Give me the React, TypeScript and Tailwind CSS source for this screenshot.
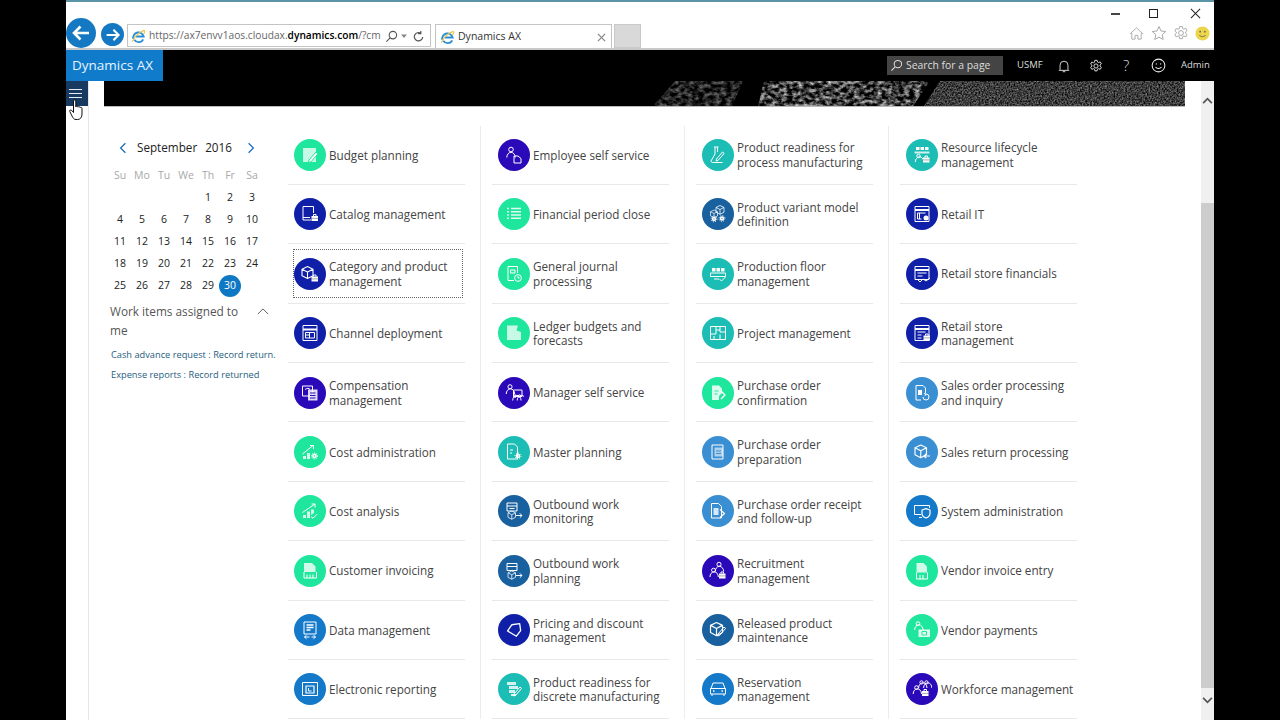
import React from "react";

const S = ({ children }: { children: React.ReactNode }) => (
  <svg viewBox="0 0 20 20" className="w-5 h-5" fill="none" stroke="currentColor" strokeWidth="1" strokeLinejoin="round">
    {children}
  </svg>
);

const Bag = ({ x = 12, y = 12 }: { x?: number; y?: number }) => (
  <g>
    <path d={`M${x + 2} ${y}v-1.5h2.5V${y}`} />
    <rect x={x} y={y} width={6.5} height={5} fill="currentColor" stroke="none" />
    <path d={`M${x} ${y + 2.4}h6.5`} stroke="#555" strokeWidth="0.5" />
  </g>
);
const Gear = ({ x = 14, y = 14, r = 2 }: { x?: number; y?: number; r?: number }) => (
  <g>
    <circle cx={x} cy={y} r={r} strokeWidth="1.6" />
    <circle cx={x} cy={y} r={r + 1.5} strokeDasharray="1 1.3" strokeWidth="1" />
  </g>
);
const Person = ({ x = 7, y = 3, s = 1 }: { x?: number; y?: number; s?: number }) => (
  <g>
    <circle cx={x} cy={y + 2 * s} r={2.3 * s} />
    <path d={`M${x - 4.2 * s} ${y + 10 * s}c0-3 2-5.2 4.2-5.2s4.2 2.2 4.2 5.2`} />
  </g>
);
const Doc = ({ x = 4, y = 2, w = 10, h = 15 }: { x?: number; y?: number; w?: number; h?: number }) => (
  <path d={`M${x} ${y}h${w - 3}l3 3v${h - 3}h-${w}z`} />
);
const Store = () => (
  <g>
    <rect x="3" y="2.5" width="14" height="15" />
    <path d="M3 6.5h14" strokeWidth="2" />
    <path d="M5.5 9.5h9v5.5h-9zM5.5 12h4M9.5 9.5V15" />
  </g>
);
const Cube = ({ x = 3, y = 3, s = 1 }: { x?: number; y?: number; s?: number }) => (
  <g transform={`translate(${x} ${y}) scale(${s})`}>
    <path d="M5 0l5 2.4v6L5 11 0 8.4v-6zM0 2.4 5 5l5-2.6M5 5v6" />
  </g>
);
const Arrow = ({ x = 11, y = 15 }: { x?: number; y?: number }) => (
  <path d={`M${x} ${y}h6m-2.2-2.2 2.2 2.2-2.2 2.2`} />
);
const Clock = ({ x = 14, y = 14 }: { x?: number; y?: number }) => (
  <g>
    <circle cx={x} cy={y} r="3.4" />
    <path d={`M${x} ${y - 1.8}v1.8h1.6`} />
  </g>
);
const Pencil = ({ x = 11, y = 16 }: { x?: number; y?: number }) => (
  <path d={`M${x} ${y}l6-7 1.6 1.4-6 7-2 .6z`} />
);

const icons: Record<string, React.ReactNode> = {
  budget: <S><rect x="3" y="3" width="13" height="14" fill="currentColor" stroke="none" opacity=".75" /><path d="M9 15l7-8 2 1.8-7 8-2.6.6z" fill="currentColor" stroke="#1ee79d" /></S>,
  catalog: <S><path d="M11 16H3V2.5h10.5V9" /><path d="M3 13.5h7" /><Bag x={11.5} y={12} /></S>,
  category: <S><Cube x={2} y={2.5} s={1.1} /><Bag x={11.5} y={12.5} /></S>,
  channel: <S><Store /></S>,
  comp: <S><rect x="2.5" y="3" width="10" height="10" /><path d="M5 6.5c2-1.5 4-1.5 5 0" /><rect x="8" y="6.5" width="9.5" height="11" fill="currentColor" stroke="none" opacity=".85" /><path d="M10 10h5.5M10 12.5h5.5M10 15h5.5" stroke="#2a0ab8" /></S>,
  costadmin: <S><path d="M2.5 12 13 3.5M10 3.5h3.5V7" /><path d="M3 17v-3h3v3zM7 17v-6h3v6z" fill="currentColor" stroke="none" opacity=".8" /><Gear x={14.5} y={14} r={1.6} /></S>,
  costanalysis: <S><path d="M2.5 11.5 15 3M11.5 3H15v3.5" /><path d="M3 17v-3h3v3zM7 17V10.5h3V17zM11 14V8.5h3V12z" fill="currentColor" stroke="none" opacity=".8" /><path d="M11 15.5l2 1.8 4-4" /></S>,
  custinv: <S><path d="M4 2h8l3.5 3.5V11H4z" fill="currentColor" stroke="none" opacity=".8" /><path d="M4 11v6h12.5v-6M7 17v-3.5M10 17v-3.5M13 17v-3.5" /></S>,
  data: <S><rect x="4" y="2" width="12" height="12" /><path d="M6.5 5h7M6.5 7.5h7M6.5 10h4" strokeWidth="1.3" /><path d="M4.5 17h5M6.5 15.2 4.5 17l2 1.8M15.5 17h-4M13.5 15.2l2 1.8-2 1.8" /></S>,
  electronic: <S><rect x="2.5" y="3.5" width="15" height="13" /><rect x="6" y="7" width="8" height="7" strokeWidth="1.2" /><path d="M8.5 9v3h3" /></S>,
  employee: <S><Person x={7} y={2.5} /><path d="M10 11h4l3 2.5V18h-7z" /></S>,
  period: <S><path d="M3 4.5h2M7 4.5h10M3 7.8h2M7 7.8h10M3 11h2M7 11h10M3 14.3h2M7 14.3h10" strokeWidth="1.6" opacity=".85" /></S>,
  journal: <S><path d="M4 2.5h9.5V9M10 16.5H4v-14" /><path d="M6.5 6h4.5v3H6.5z" /><Clock x={14} y={14} /></S>,
  ledger: <S><path d="M3 2.5h11l-1.5 5 4.5 1.5v8H3z" fill="currentColor" stroke="none" opacity=".75" /></S>,
  manager: <S><Person x={6} y={2} s={.9} /><rect x="9.5" y="7" width="8.5" height="6.5" /><Person x={11} y={12} s={.55} /><Person x={15.5} y={12} s={.55} /></S>,
  master: <S><Doc x={3.5} y={2} w={10} h={15} /><path d="M6 8h3M6 11h2" /><Gear x={14} y={14} r={1.5} /></S>,
  outmon: <S><rect x="3" y="2" width="10" height="8" /><path d="M3 5h10M5.5 7.5h5" /><Cube x={4} y={10} s={.75} /><Arrow x={12} y={14.5} /></S>,
  outplan: <S><rect x="3" y="2.5" width="10" height="7" /><path d="M3 5.5h10" /><Cube x={4} y={10} s={.75} /><Arrow x={12} y={14.5} /></S>,
  pricing: <S><path d="M8.5 4.5h8v7l-5 5L3.5 10z" transform="rotate(-8 10 10)" strokeWidth="1.3" /></S>,
  discrete: <S><path d="M3 3h9v3H3zM5 7h9v3H5z" fill="currentColor" stroke="none" opacity=".8" /><path d="M5 11h6v3H5zM7 15h5v2H7z" fill="currentColor" stroke="none" opacity=".8" /><Pencil x={10} y={15} /></S>,
  process: <S><path d="M6 2h4.5M7 2v7l-4 7c0 1 .6 1.5 1.5 1.5h10" /><path d="M9.5 2v5" /><Pencil x={8.5} y={14} /></S>,
  variant: <S><Cube x={8} y={1.5} s={.8} /><Cube x={2.5} y={6} s={.7} /><Gear x={6} y={15} r={1.4} /><Gear x={14} y={14.5} r={1.4} /></S>,
  floor: <S><path d="M4 4h3.5v3.5H4zM8.5 4H12v3.5H8.5zM13 4h3.5v3.5H13z" fill="currentColor" stroke="none" /><path d="M2.5 9h15v3.5h-15z" /><path d="M6 15h5M11.5 15l2 2 4-4" /></S>,
  project: <S><rect x="2.5" y="3.5" width="15" height="13" /><path d="M8 3.5V11H2.5M12 3.5V9h5.5M8 7h4M12 11.5v5M6 13v3.5" /></S>,
  poconf: <S><path d="M4 2.5h7l3 3V10l-3 3v4H4z" fill="currentColor" stroke="none" opacity=".85" /><path d="M6.5 8h4M6.5 11h3" stroke="#1ee79d" /><path d="M13 8l4 4-4 4" strokeWidth="1.4" /></S>,
  poprep: <S><rect x="4" y="3" width="11" height="14" /><rect x="6.5" y="5.5" width="8.5" height="9" fill="currentColor" stroke="none" opacity=".6" /><path d="M8 9h5M8 11.5h5" stroke="#3a8fd0" /></S>,
  poreceipt: <S><path d="M3.5 2.5h7l3 3V17h-10z" /><rect x="5.5" y="7" width="5" height="7" fill="currentColor" stroke="none" opacity=".8" /><path d="M12 8.5l4.5 4-4.5 4" strokeWidth="1.2" /></S>,
  recruit: <S><Person x={5.5} y={7.5} s={.85} /><Person x={11} y={1.5} s={.9} /><Bag x={11} y={12.5} /></S>,
  released: <S><Cube x={2.5} y={2.5} s={1.2} /><Pencil x={10} y={14} /></S>,
  reservation: <S><path d="M3 9.5l2-5.500h10l2 5.500M2.5 9.500h15V15h-15zM4 15v2M16 15v2" /><path d="M5 12h1.500M13.500 12H15" strokeWidth="1.4" /></S>,
  lifecycle: <S><path d="M4 2h3.500v3H4zM8.500 2H12v3H8.500zM13 2h3.500v3H13z" fill="currentColor" stroke="none" /><path d="M2.500 6.500h15v2h-15z" fill="currentColor" stroke="none" opacity=".8" /><Person x={6.5} y={9.5} s={.75} /><Bag x={11} y={12.5} /></S>,
  retailit: <S><rect x="3" y="2.5" width="14" height="15" /><path d="M3 6h14" strokeWidth="2" /><path d="M5.500 9h8M5.500 9v6h4M7.500 9v6" /><circle cx="14" cy="14" r="2.5" fill="currentColor" stroke="none" /></S>,
  retailfin: <S><rect x="3" y="2.5" width="14" height="13" /><path d="M3 6h14" strokeWidth="2" /><path d="M5.500 9h9M5.500 12h5" /><path d="M5 15l3 3 3-3 3 2 4-3" /></S>,
  retailmgmt: <S><rect x="3" y="2.5" width="14" height="15" /><path d="M3 6h14" strokeWidth="2" /><path d="M5.500 9h8M5.500 12h4M5.500 15h4" /><Bag x={11.5} y={12.5} /></S>,
  salesorder: <S><path d="M4 2.500h7l2.500 2.500v5M9 17H4V2.500" /><rect x="6" y="7" width="4" height="5" fill="currentColor" stroke="none" /><path d="M11 14a3 3 0 1 0 3-3M12 10.500l2 .5-1 1.800" /></S>,
  salesreturn: <S><Cube x={3} y={3} s={1.15} /><path d="M18 14h-6m2.200-2.200L12 14l2.200 2.200" strokeWidth="1.2" /></S>,
  sysadmin: <S><path d="M9 13.500H2.500V4.500h15V7M7 16.500h3" /><path d="M10 9l4-1.400L18 9v3.500c0 2.400-2 3.800-4 4.500-2-.7-4-2.100-4-4.500z" strokeWidth="1.2" /></S>,
  vendorinv: <S><path d="M4.500 2h7l3.500 3.500v6H4.500z" fill="currentColor" stroke="none" opacity=".8" /><path d="M4.500 11.500V18h11v-6.500M8 18v-4M11 18v-4" /></S>,
  vendorpay: <S><Person x={6} y={2} s={.8} /><rect x="6.5" y="9.5" width="11.5" height="7.5" fill="currentColor" stroke="none" opacity=".85" /><rect x="10" y="11.5" width="4.5" height="3.5" stroke="#1ee79d" /></S>,
  workforce: <S><Person x={4.5} y={7} s={.8} /><Person x={9.5} y={2} s={.7} /><Person x={14.5} y={2} s={.7} /><Bag x={10} y={12} /></S>,
};

const G = "bg-[#1ee79d]";
const N = "bg-[#0f1fa8]";
const P = "bg-[#2a0ab8]";
const B = "bg-[#1479c9]";
const T = "bg-[#1cbdb5]";
const D = "bg-[#19609f]";
const L = "bg-[#3a8fd2]";

type Tile = [string, string, string, boolean?];
const cols: Tile[][] = [
  [["Budget planning", G, "budget"], ["Catalog management", N, "catalog"], ["Category and product management", N, "category", true], ["Channel deployment", N, "channel"], ["Compensation management", P, "comp"], ["Cost administration", G, "costadmin"], ["Cost analysis", G, "costanalysis"], ["Customer invoicing", G, "custinv"], ["Data management", B, "data"], ["Electronic reporting", B, "electronic"]],
  [["Employee self service", P, "employee"], ["Financial period close", G, "period"], ["General journal processing", G, "journal"], ["Ledger budgets and forecasts", G, "ledger"], ["Manager self service", P, "manager"], ["Master planning", T, "master"], ["Outbound work monitoring", D, "outmon"], ["Outbound work planning", D, "outplan"], ["Pricing and discount management", N, "pricing"], ["Product readiness for discrete manufacturing", T, "discrete"]],
  [["Product readiness for process manufacturing", T, "process"], ["Product variant model definition", D, "variant"], ["Production floor management", T, "floor"], ["Project management", T, "project"], ["Purchase order confirmation", G, "poconf"], ["Purchase order preparation", L, "poprep"], ["Purchase order receipt and follow-up", L, "poreceipt"], ["Recruitment management", P, "recruit"], ["Released product maintenance", D, "released"], ["Reservation management", B, "reservation"]],
  [["Resource lifecycle management", T, "lifecycle"], ["Retail IT", N, "retailit"], ["Retail store financials", N, "retailfin"], ["Retail store management", N, "retailmgmt"], ["Sales order processing and inquiry", L, "salesorder"], ["Sales return processing", L, "salesreturn"], ["System administration", B, "sysadmin"], ["Vendor invoice entry", G, "vendorinv"], ["Vendor payments", G, "vendorpay"], ["Workforce management", P, "workforce"]],
];

const IE = () => (
  <svg viewBox="0 0 16 16" className="w-[15px] h-[15px] shrink-0">
    <path d="M2.500 10.500A5.500 5.500 0 0 1 13.500 8H5M13 11a5.500 5.500 0 0 1-9.500.5" fill="none" stroke="#2c8fd6" strokeWidth="2" />
    <path d="M1.500 13.500C3 9 8 3.500 14 1.500c1.500 1 0 3-.7 4" fill="none" stroke="#e8c547" strokeWidth="1.2" />
  </svg>
);

const Smile = ({ c }: { c: string }) => (
  <svg viewBox="0 0 16 16" className="w-[15px] h-[15px] block" fill="none" stroke={c} strokeWidth="1.1">
    <circle cx="8" cy="8" r="6.8" />
    <circle cx="5.7" cy="6.3" r=".7" fill={c} stroke="none" />
    <circle cx="10.3" cy="6.3" r=".7" fill={c} stroke="none" />
    <path d="M4.8 9.600c1.600 2.200 4.800 2.200 6.400 0" />
  </svg>
);

const GearLine = ({ c, w }: { c: string; w: string }) => (
  <svg viewBox="0 0 16 16" className={w} fill="none" stroke={c} strokeWidth="1">
    <circle cx="8" cy="8" r="2.4" />
    <path d="M6.700 1.500h2.600l.4 2 1.200.6 1.900-.8 1.300 2.300-1.500 1.300v1.300l1.500 1.300-1.300 2.300-1.900-.8-1.200.6-.4 2H6.700l-.4-2-1.200-.6-1.900.8-1.300-2.300 1.500-1.300V7.100L1.900 5.800l1.300-2.300 1.900.8 1.200-.6z" />
  </svg>
);

function Banner() {
  return (
    <svg className="block w-full h-[25px]" viewBox="0 0 1081 25" preserveAspectRatio="none">
      <defs>
        <filter id="tx" x="0" y="0" width="100%" height="100%" colorInterpolationFilters="sRGB">
          <feTurbulence type="fractalNoise" baseFrequency="0.18 0.26" numOctaves="3" seed="5" />
          <feColorMatrix values="1.6 0 0 0 -0.55 1.6 0 0 0 -0.55 1.6 0 0 0 -0.55 0 0 0 0 1" />
          <feGaussianBlur stdDeviation="0.5" />
        </filter>
        <filter id="tx2" x="0" y="0" width="100%" height="100%" colorInterpolationFilters="sRGB">
          <feTurbulence type="fractalNoise" baseFrequency="0.6" numOctaves="2" seed="9" />
          <feColorMatrix values="0.8 0 0 0 -0.16 0.8 0 0 0 -0.16 0.8 0 0 0 -0.16 0 0 0 0 1" />
          <feGaussianBlur stdDeviation="0.4" />
        </filter>
        <clipPath id="c1"><path d="M549 25 571 0H639L628 25Z" /></clipPath>
        <clipPath id="c2"><path d="M654 25 660 0H826L809 25Z" /></clipPath>
        <clipPath id="c3"><path d="M820 25 836 0H1081V25Z" /></clipPath>
      </defs>
      <rect width="1081" height="25" fill="#000" />
      <g clipPath="url(#c1)"><rect width="1081" height="25" filter="url(#tx)" opacity=".55" /></g>
      <g clipPath="url(#c2)"><rect width="1081" height="25" filter="url(#tx)" /></g>
      <g clipPath="url(#c3)"><rect width="1081" height="25" filter="url(#tx2)" /></g>
    </svg>
  );
}

export default function App() {
  const font = { fontFamily: '"Open Sans", "Noto Sans", sans-serif' };
  const days = ["", "", "", "", ...Array.from({ length: 30 }, (_, i) => String(i + 1))];
  return (
    <div className="w-[1280px] h-[720px] overflow-hidden bg-black flex" style={font}>
      <div className="w-[66px] shrink-0" />
      <div className="w-[1148px] shrink-0 flex flex-col relative">
        {/* browser chrome */}
        <div className="h-[50px] shrink-0 bg-white border-t-2 border-t-[#5b96a8] border-b-2 border-b-[#c8c8c8] flex justify-between">
          <div className="flex items-end">
            <div className="w-[30px] h-[30px] mr-[5px] rounded-full bg-[#1578c2] flex items-center justify-center">
              <svg viewBox="0 0 20 20" className="w-5 h-5" fill="none" stroke="#fff" strokeWidth="2.6"><path d="M18 10H3M9.500 3.500 3 10l6.500 6.500" /></svg>
            </div>
            <div className="w-[23px] h-[23px] mb-[2px] mr-[3px] rounded-full bg-[#1578c2] flex items-center justify-center">
              <svg viewBox="0 0 20 20" className="w-4 h-4" fill="none" stroke="#fff" strokeWidth="2.6"><path d="M2 10h15M10.500 3.500 17 10l-6.500 6.500" /></svg>
            </div>
            <div className="w-[304px] h-[23px] mb-[1px] pt-[1px] border border-[#c4c4c4] flex items-center pl-[3px] pr-[4px] text-[10.2px] text-[#666] whitespace-nowrap">
              <IE />
              <span className="ml-[3px] w-[232px]">https://ax7envv1aos.cloudax.<span className="text-black font-semibold">dynamics.com</span>/?cm</span>
              <svg viewBox="0 0 14 14" className="w-[13px] h-[13px] ml-[4px]" fill="none" stroke="#555" strokeWidth="1.2"><circle cx="8.5" cy="5.5" r="4" /><path d="M5.500 8.500 1.500 12.500" /></svg>
              <svg viewBox="0 0 8 8" className="w-[8px] h-[8px] mx-[2px]"><path d="M1 2.500h6L4 6z" fill="#888" /></svg>
              <svg viewBox="0 0 14 14" className="w-[13px] h-[13px] ml-[2px]" fill="none" stroke="#555" strokeWidth="1.3"><path d="M11.500 7.500a4.500 4.500 0 1 1-2-4M9.500 1v3H6.500" /></svg>
            </div>
            <div className="w-[177px] h-[24px] ml-[4px] pt-[1px] border border-b-0 border-[#c4c4c4] flex items-center pl-[4px] pr-[5px] text-[10.5px] text-[#333]">
              <IE />
              <span className="ml-[3px] flex-1">Dynamics AX</span>
              <svg viewBox="0 0 10 10" className="w-[9px] h-[9px]" fill="none" stroke="#888" strokeWidth="1.4"><path d="M1 1l8 8M9 1 1 9" /></svg>
            </div>
            <div className="w-[27px] h-[24px] ml-[2px] bg-[#d9d9d9] border border-[#c9c9c9]" />
          </div>
          <div className="flex flex-col items-end">
            <div className="flex items-center h-[23px] pr-[13px] gap-[29px]">
              <div className="w-[9px] h-[2px] bg-[#444]" />
              <div className="w-[9px] h-[9px] border border-[#222] mr-[3px]" />
              <svg viewBox="0 0 12 12" className="w-[11px] h-[11px]" fill="none" stroke="#222" strokeWidth="1.1"><path d="M1 1l10 10M11 1 1 11" /></svg>
            </div>
            <div className="flex items-center pr-[4px] gap-[6px]">
              <svg viewBox="0 0 16 16" className="w-[15px] h-[15px] mr-[1px]" fill="none" stroke="#aaa" strokeWidth="1"><path d="M1 8.500 8 2l7 6.500M3 7.500V14h3.500v-4h3v4H13V7.500" /></svg>
              <svg viewBox="0 0 16 16" className="w-[16px] h-[16px]" fill="none" stroke="#aaa" strokeWidth="1"><path d="M8 1.500l2 4.500 4.800.5-3.600 3.200 1 4.800L8 12.200l-4.200 2.300 1-4.800L1.200 6.500 6 6z" /></svg>
              <GearLine c="#aaa" w="w-[16px] h-[16px]" />
              <svg viewBox="0 0 16 16" className="w-[15px] h-[15px]"><circle cx="8" cy="8" r="7.5" fill="#ecd54a" /><circle cx="5.5" cy="6" r=".9" fill="#665" /><circle cx="10.5" cy="6" r=".9" fill="#665" /><path d="M4.500 9.600c1.800 2.300 5.200 2.300 7 0" fill="none" stroke="#665" /></svg>
            </div>
          </div>
        </div>
        {/* nav */}
        <div className="h-[31px] shrink-0 bg-black flex items-center text-white">
          <div className="w-[97px] h-full pr-[4px] bg-[#0f7bca] flex items-center justify-center text-[13.5px] text-[#e8f4ff]">Dynamics AX</div>
          <div className="flex-1" />
          <div className="w-[116px] h-[19px] bg-[#444] flex items-center pl-[3px] gap-[3px] text-[10.4px] text-[#ddd]">
            <svg viewBox="0 0 14 14" className="w-[13px] h-[13px]" fill="none" stroke="#ddd" strokeWidth="1.1"><circle cx="8.5" cy="5.5" r="4" /><path d="M5.500 8.500 1.500 12.500" /></svg>
            <span className="pt-[1px]">Search for a page</span>
          </div>
          <span className="ml-[14px] w-[26px] text-[9.5px] text-[#ddd]">USMF</span>
          <svg viewBox="0 0 16 16" className="ml-[14px] w-[14px] h-[14px]" fill="none" stroke="#eee" strokeWidth="1"><path d="M3.500 12V7a4.500 4.500 0 0 1 9 0v5l1 1h-11zM6.500 14.500h3" /></svg>
          <span className="ml-[18px]"><GearLine c="#eee" w="w-[14px] h-[14px] block" /></span>
          <span className="ml-[20px] w-[8px] text-[15px] font-light text-[#ddd] leading-none">?</span>
          <span className="ml-[19.5px]"><Smile c="#eee" /></span>
          <span className="ml-[15.5px] mr-[3px] w-[30px] text-[9.5px] text-[#ddd]">Admin</span>
        </div>
        {/* body */}
        <div className="flex-1 min-h-0 flex bg-white">
          <div className="w-[22px] shrink-0 border-r border-[#e6e6e6] box-content">
            <div className="h-[25px] w-[22px] bg-[#183a60] flex flex-col items-start pl-[3px] gap-[3px] pt-[8px]">
              <div className="w-[13px] h-[1px] bg-[#e8eef4]" />
              <div className="w-[13px] h-[1px] bg-[#e8eef4]" />
              <div className="w-[13px] h-[1px] bg-[#e8eef4]" />
            </div>
          </div>
          <div className="flex-1 min-w-0 flex flex-col pl-[15px] pr-[16px]">
            <div className="shrink-0 h-[25px] border-b border-[#bbb] box-content -mb-[1px]"><Banner /></div>
            <div className="flex min-h-0 -ml-[15px]">
              {/* calendar */}
              <div className="w-[199px] shrink-0 pl-[20px] pt-[31px]">
                <div className="flex items-center h-[22px] text-[11.7px] text-[#222]">
                  <svg viewBox="0 0 10 14" className="w-[8px] h-[12px] ml-[10px]" fill="none" stroke="#1d6fa8" strokeWidth="1.6"><path d="M8 1 2 7l6 6" /></svg>
                  <span className="ml-[10px]">September</span>
                  <span className="ml-[8px]">2016</span>
                  <svg viewBox="0 0 10 14" className="w-[8px] h-[12px] ml-[15px]" fill="none" stroke="#1d6fc8" strokeWidth="1.6"><path d="M2 1l6 6-6 6" /></svg>
                </div>
                <div className="grid grid-cols-[repeat(7,22px)] auto-rows-[22px] mt-[6px] text-[10.5px] text-center items-center justify-items-center">
                  {["Su", "Mo", "Tu", "We", "Th", "Fr", "Sa"].map((d) => (
                    <span key={d} className="text-[#a8a8a8]">{d}</span>
                  ))}
                  {days.map((d, i) =>
                    d === "30" ? (
                      <span key={i} className="w-[22px] h-[22px] rounded-full bg-[#0f78c4] text-white flex items-center justify-center">{d}</span>
                    ) : (
                      <span key={i} className="text-[#222]">{d}</span>
                    )
                  )}
                </div>
                <div className="mt-[4.5px] flex items-start text-[11.8px] leading-[19px] text-[#555]">
                  <span className="ml-[1px] w-[144px]">Work items assigned to me</span>
                  <svg viewBox="0 0 14 8" className="w-[12px] h-[7px] ml-[3px] mt-[6px]" fill="none" stroke="#555" strokeWidth="1.1"><path d="M1 7l6-6 6 6" /></svg>
                </div>
                <div className="mt-[5px] ml-[2px] text-[9.25px] leading-[20px] text-[#1f5d80] whitespace-nowrap">
                  <div>Cash advance request : Record return.</div>
                  <div>Expense reports : Record returned</div>
                </div>
              </div>
              {/* tiles */}
              <div className="flex pt-[19.5px]">
                {cols.map((col, ci) => (
                  <div key={ci} className="w-[204px] shrink-0">
                    <div className={`w-[193px] ${ci < 3 ? "border-r border-[#ececec]" : ""}`}>
                      {col.map(([label, bg, icon, focus]) => (
                        <div key={label} className="relative w-[177px] h-[59.4px] border-b border-[#e8e8e8] pl-[6px] pt-[0.5px] flex items-center gap-[3px]">
                          <div className={`w-[32px] h-[32px] rounded-full shrink-0 flex items-center justify-center text-white ${bg}`}>
                            {icons[icon]}
                          </div>
                          <span className="text-[11.7px] leading-[14.5px] text-[#444] w-[136px]">{label}</span>
                          {focus && <span className="absolute left-[5px] top-[5px] w-[170px] h-[49px] border border-dotted border-[#666]" />}
                        </div>
                      ))}
                    </div>
                  </div>
                ))}
              </div>
            </div>
          </div>
          {/* scrollbar */}
          <div className="w-[13px] shrink-0 bg-[#f0f0f0] flex flex-col items-center">
            <svg viewBox="0 0 12 8" className="w-[11px] h-[7px] mt-[16px] shrink-0" fill="none" stroke="#555" strokeWidth="2"><path d="M1 7l5-5 5 5" /></svg>
            <div className="w-full h-[485px] mt-[99px] shrink-0 bg-[#cdcdcd]" />
            <svg viewBox="0 0 12 8" className="w-[11px] h-[7px] mt-[8.5px] shrink-0" fill="none" stroke="#555" strokeWidth="2"><path d="M1 1l5 5 5-5" /></svg>
          </div>
        </div>
        {/* pointer cursor */}
        <svg viewBox="0 0 14 22" className="absolute left-[2px] top-[99px] w-[16px] h-[22px]" fill="#fff" stroke="#111" strokeWidth="1">
          <path d="M4.500 2c0-1.500 2.300-1.500 2.300 0v6c.3-1 2-1 2.200.2.400-.9 2-.7 2.100.4.600-.6 1.900-.3 1.900.8V15c0 3-1.500 5.500-4.500 5.500H7c-2.200 0-3-1.500-4-3.500L.8 12.500c-.6-1.300 1-2.200 2-1l1.700 2z" />
        </svg>
      </div>
      <div className="flex-1" />
    </div>
  );
}
